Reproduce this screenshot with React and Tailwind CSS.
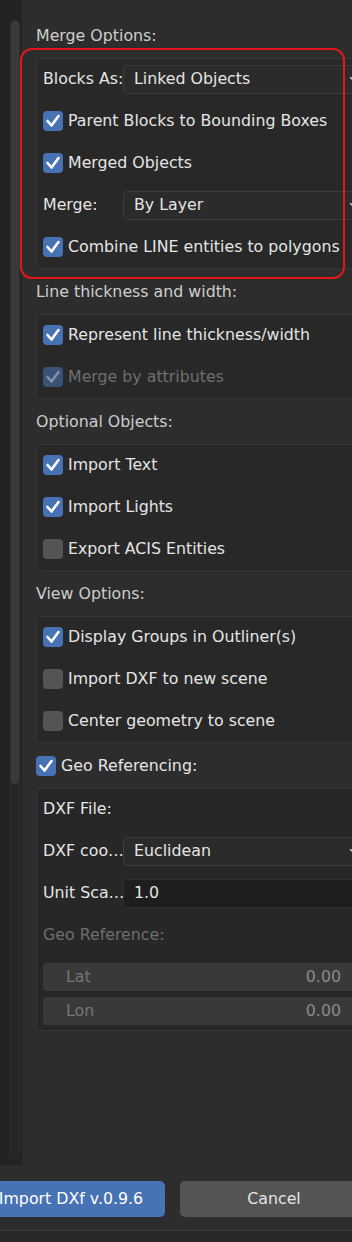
import React from "react";

const F = { fontFamily: '"DejaVu Sans", "Liberation Sans", sans-serif' };

function Check({ on, disabled }) {
  const bg = !on
    ? "bg-[#545454]"
    : disabled
    ? "bg-[#3a5276]"
    : "bg-[#4772b3]";
  return (
    <span className={`w-[20px] h-[20px] rounded-[4px] flex items-center justify-center shrink-0 ${bg}`}>
      {on && (
        <svg width="20" height="20" viewBox="0 0 20 20">
          <path
            d="M4.5 10 L8.5 14.5 L15.5 5"
            stroke={disabled ? "#7f93ae" : "#ffffff"}
            strokeWidth="2.6"
            fill="none"
            strokeLinecap="round"
            strokeLinejoin="round"
          />
        </svg>
      )}
    </span>
  );
}

function CheckRow({ label, on, disabled }) {
  return (
    <div className="h-[28px] flex items-center gap-[5px]">
      <Check on={on} disabled={disabled} />
      <span className={disabled ? "text-[#6f6f6f]" : "text-[#e5e5e5]"}>{label}</span>
    </div>
  );
}

function Chevron() {
  return (
    <svg width="12" height="12" viewBox="0 0 12 12" className="shrink-0">
      <path d="M2.5 4.5 L6 8 L9.5 4.5" stroke="#cfcfcf" strokeWidth="1.4" fill="none" strokeLinecap="round" strokeLinejoin="round" />
    </svg>
  );
}

function Dropdown({ label, value }) {
  return (
    <div className="h-[28px] flex items-center">
      <span className="w-[80px] shrink-0 text-[#e5e5e5] whitespace-nowrap">{label}</span>
      <div className="flex-1 h-[29px] rounded-[4px] bg-[#2b2b2b] border border-[#3c3c3c] flex items-center justify-between pl-[10px] pr-[4px] text-[#e5e5e5]">
        <span>{value}</span>
        <Chevron />
      </div>
    </div>
  );
}

function Heading({ children }) {
  return <div className="h-[45px] flex items-center text-[#cdcdcd]">{children}</div>;
}

function Box({ children }) {
  return (
    <div className="w-[336px] rounded-[5px] bg-[#282828] border border-[#363636] pl-[6px] pr-[6px] pt-[6px] pb-[7px] flex flex-col gap-[14px]">
      {children}
    </div>
  );
}

export default function App() {
  return (
    <div style={F} className="w-[352px] h-[1242px] overflow-hidden bg-[#2d2d2d] text-[15.8px] relative flex flex-col">
      <div className="h-[1165px] flex shrink-0">
        <div className="w-[22px] shrink-0 bg-[#232323] pt-[20px] pl-[10px]">
          <div className="w-[10px] h-[1138px] rounded-[5px] bg-[#252525] border border-[#2f2f2f] flex flex-col">
            <div className="h-[763px] w-[8px] rounded-[4px] bg-[#3a3a3a]" />
          </div>
        </div>
        <div className="flex-1 pl-[14px] pt-[13px] flex flex-col">
          <Heading>Merge Options:</Heading>
          <Box>
            <Dropdown label="Blocks As:" value="Linked Objects" />
            <CheckRow label="Parent Blocks to Bounding Boxes" on />
            <CheckRow label="Merged Objects" on />
            <Dropdown label="Merge:" value="By Layer" />
            <CheckRow label="Combine LINE entities to polygons" on />
          </Box>
          <Heading>Line thickness and width:</Heading>
          <Box>
            <CheckRow label="Represent line thickness/width" on />
            <CheckRow label="Merge by attributes" on disabled />
          </Box>
          <Heading>Optional Objects:</Heading>
          <Box>
            <CheckRow label="Import Text" on />
            <CheckRow label="Import Lights" on />
            <CheckRow label="Export ACIS Entities" />
          </Box>
          <Heading>View Options:</Heading>
          <Box>
            <CheckRow label="Display Groups in Outliner(s)" on />
            <CheckRow label="Import DXF to new scene" />
            <CheckRow label="Center geometry to scene" />
          </Box>
          <div className="h-[45px] flex items-center gap-[5px] text-[#e5e5e5]">
            <Check on />
            <span>Geo Referencing:</span>
          </div>
          <div className="w-[336px] rounded-[5px] bg-[#272727] border border-[#363636] pl-[6px] pr-[6px] pt-[6px] pb-[5px] flex flex-col">
            <div className="h-[28px] flex items-center text-[#e5e5e5]">DXF File:</div>
            <div className="mt-[14px]">
              <Dropdown label="DXF coo…" value="Euclidean" />
            </div>
            <div className="mt-[14px] h-[28px] flex items-center">
              <span className="w-[80px] shrink-0 text-[#e5e5e5] whitespace-nowrap">Unit Sca…</span>
              <div className="flex-1 h-[29px] rounded-[4px] bg-[#1e1e1e] border border-[#2f2f2f] flex items-center pl-[10px] text-[#e5e5e5]">1.0</div>
            </div>
            <div className="mt-[14px] h-[28px] flex items-center text-[#6e6e6e]">Geo Reference:</div>
            <div className="mt-[14px] h-[28px] rounded-[4px] bg-[#393939] flex items-center justify-between pl-[23px] pr-[24px]">
              <span className="text-[#767676]">Lat</span>
              <span className="text-[#8a8a8a]">0.00</span>
            </div>
            <div className="mt-[6px] h-[28px] rounded-[4px] bg-[#393939] flex items-center justify-between pl-[23px] pr-[24px]">
              <span className="text-[#767676]">Lon</span>
              <span className="text-[#8a8a8a]">0.00</span>
            </div>
          </div>
        </div>
      </div>
      <div className="h-[65px] shrink-0 flex items-start pt-[16px] ml-[-23px] gap-[15px]">
        <div className="w-[188px] h-[36px] shrink-0 rounded-[5px] bg-[#4772b3] flex items-center justify-center text-white">
          Import DXf v.0.9.6
        </div>
        <div className="w-[188px] h-[36px] shrink-0 rounded-[5px] bg-[#545454] flex items-center justify-center text-[#e5e5e5]">
          Cancel
        </div>
      </div>
      <div className="flex-1 bg-[#282828] border-t border-[#3a3a3a]" />
      <div className="absolute left-[20px] top-[48px] w-[325px] h-[231px] rounded-[12px] border-2 border-[#e3161c] pointer-events-none" />
    </div>
  );
}
